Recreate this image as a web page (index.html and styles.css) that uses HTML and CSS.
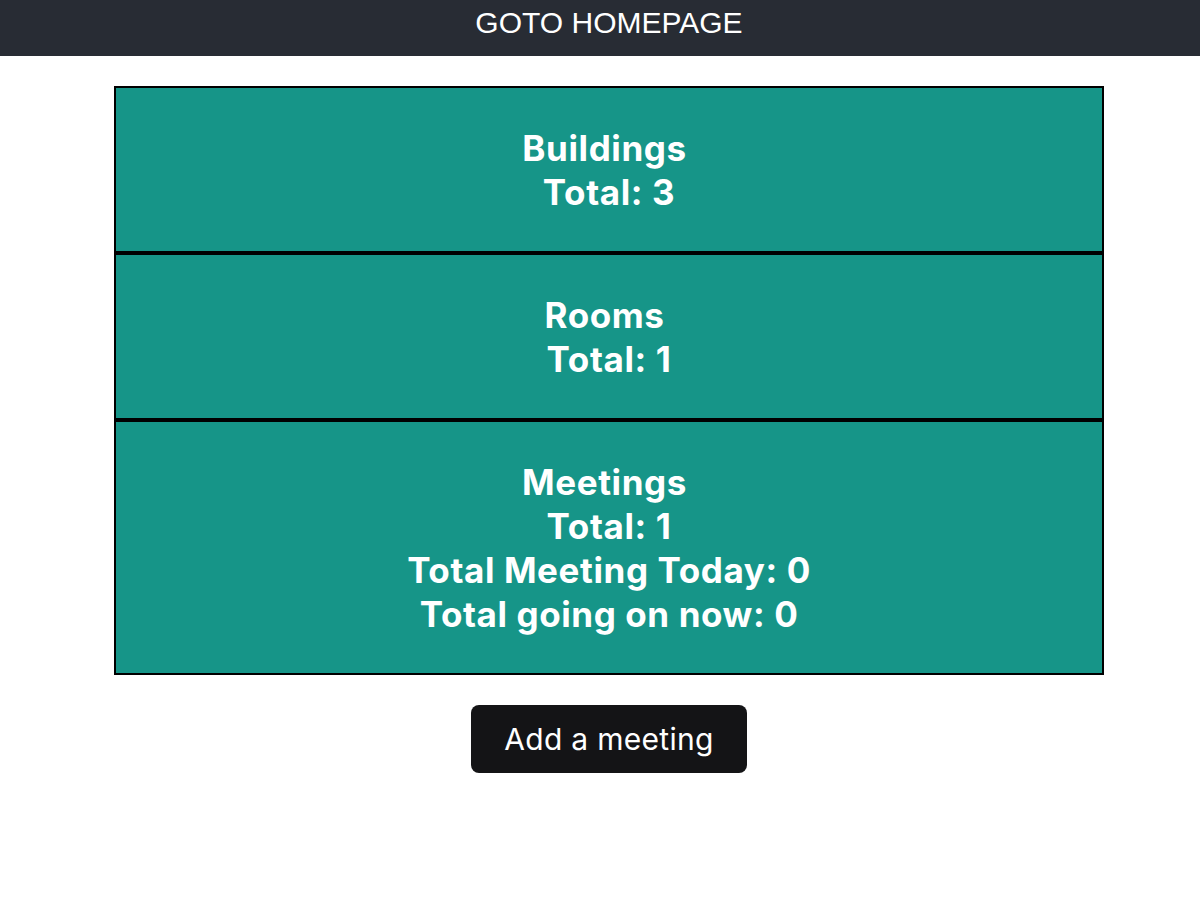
FILE: index.html
```html
<!DOCTYPE html>
<html>
<head>
<meta charset="utf-8">
<link rel="stylesheet" href="styles.css">
</head>
<body>
<header class="topbar"><a class="home-link" href="#">GOTO HOMEPAGE</a></header>
<main class="dashboard">
  <section class="stats">
    <div class="stat-card">Buildings&nbsp;<br>Total: 3</div>
    <div class="stat-card">Rooms&nbsp;<br>Total: 1</div>
    <div class="stat-card">Meetings&nbsp;<br>Total: 1<br>Total Meeting Today: 0<br>Total going on now: 0</div>
  </section>
  <button class="add-btn" type="button">Add a meeting</button>
</main>
</body>
</html>
```
FILE: styles.css
```css
html, body {
  margin: 0;
  padding: 0;
  background: #ffffff;
}
.topbar {
  box-sizing: border-box;
  height: 56px;
  padding: 0 0 10px 18px;
  background: #282c34;
  display: flex;
  align-items: center;
  justify-content: center;
}
.home-link {
  font-family: "Liberation Sans", Arial, sans-serif;
  font-size: 30px;
  color: #ffffff;
  text-decoration: none;
  line-height: 1;
}
.dashboard {
  display: flex;
  flex-direction: column;
  align-items: center;
  padding: 30px 0 0 18px;
}
.stats {
  width: 990px;
  display: flex;
  flex-direction: column;
}
.stat-card {
  background: #169588;
  border: 2px solid #000000;
  padding: 38px 10px 37px;
  text-align: center;
  color: #ffffff;
  font-family: Inter, "Noto Sans", sans-serif;
  font-weight: 700;
  font-size: 35px;
  letter-spacing: 0.6px;
  line-height: 44px;
}
.add-btn {
  margin-top: 30px;
  height: 68px;
  padding: 0 33px;
  background: #141416;
  color: #ffffff;
  border: none;
  border-radius: 8px;
  font-family: Inter, "Noto Sans", sans-serif;
  font-size: 30px;
  letter-spacing: 0.3px;
  cursor: pointer;
}
```
